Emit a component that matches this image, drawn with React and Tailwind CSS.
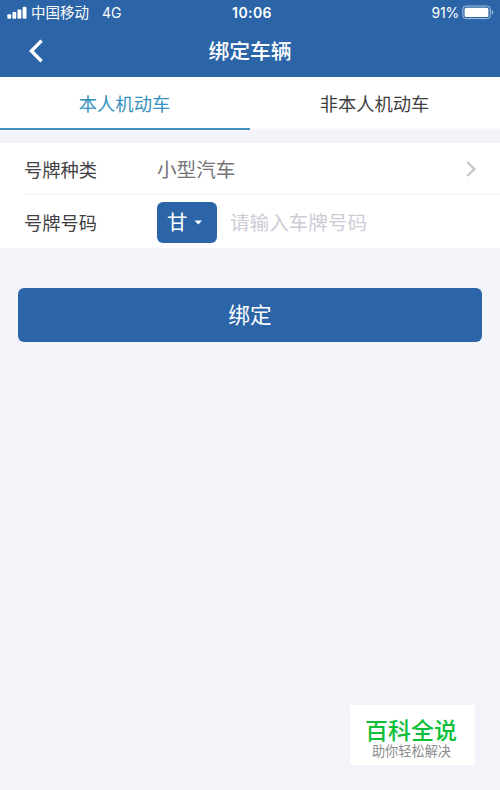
import React from 'react';

const INTER = "font-['Inter','Noto_Sans_CJK_SC',sans-serif]";

function StatusBar() {
  return (
    <div className={`grid h-[25px] grid-cols-3 items-center pl-[7px] pr-[6px] ${INTER}`}>
      <div className="flex items-center">
        <svg width="20" height="13" viewBox="0 0 20 13" fill="currentColor">
          <rect x="0.3" y="8.3" width="3.8" height="4.4" rx="1" />
          <rect x="5.4" y="6" width="3.8" height="6.7" rx="1" />
          <rect x="10.5" y="3.6" width="3.8" height="9.1" rx="1" />
          <rect x="15.6" y="0.8" width="3.9" height="11.9" rx="1" />
        </svg>
        <span className="ml-[4px] pt-[2px] whitespace-nowrap text-[14.5px] leading-none">中国移动</span>
        <span className="ml-[13px] text-[14px] leading-none">4G</span>
      </div>
      <div className="pl-[3px] text-center text-[14px] leading-none font-semibold tracking-[0.4px]">10:06</div>
      <div className="flex items-center justify-end">
        <span className="text-[14px] leading-none tracking-[-0.2px]">91%</span>
        <svg className="ml-[3px]" width="32" height="15" viewBox="0 0 32 15">
          <rect x="0.9" y="1" width="27.4" height="12.6" rx="3" fill="none" stroke="#a9c3e0" strokeWidth="1" />
          <rect x="2.6" y="2.7" width="23.8" height="9.2" rx="1.5" fill="#fff" />
          <path d="M29.8 5.2v4.2c1.1-.4 1.4-1.2 1.4-2.1s-.3-1.7-1.4-2.1z" fill="#a9c3e0" />
        </svg>
      </div>
    </div>
  );
}

function TitleBar() {
  return (
    <div className="grid h-[52px] grid-cols-[60px_1fr_60px] items-center">
      <svg className="ml-[28px]" width="17" height="26" viewBox="0 0 17 26" fill="none" stroke="currentColor" strokeWidth="3.4">
        <path d="M13.6 2.6 3.4 13l10.2 10.2" />
      </svg>
      <h1 className="pb-[2px] text-center text-[20.8px] leading-none font-medium">绑定车辆</h1>
    </div>
  );
}

function Tabs() {
  return (
    <div className="grid h-[53px] grid-cols-2 bg-white text-[18.3px]">
      <div className="flex items-center justify-center border-b-2 border-[#4292bd] pt-[2px] pr-[1px] text-[#3490bd]">本人机动车</div>
      <div className="flex items-center justify-center border-b-2 border-[#fafafc] pt-[2px] pr-[1px] text-[#3f3f44]">非本人机动车</div>
    </div>
  );
}

function VehicleForm() {
  return (
    <div className="mt-[13px] h-[105px] bg-white pl-[24px]">
      <div className="flex h-[52px] items-center border-b border-[#f4f4f6]">
        <span className="w-[133px] pt-[2px] text-[18.3px] text-[#3f3f44]">号牌种类</span>
        <span className="flex-1 text-[19.6px] text-[#747478]">小型汽车</span>
        <svg className="mr-[22px]" width="14" height="18" viewBox="0 0 14 18" fill="none" stroke="#c7c7cc" strokeWidth="2.4">
          <path d="m3.2 2 7.2 7-7.2 7" />
        </svg>
      </div>
      <div className="flex h-[54px] items-center">
        <span className="w-[133px] pt-px text-[18.3px] text-[#3f3f44]">号牌号码</span>
        <div className="flex h-[41px] w-[60px] items-center rounded-[6px] bg-[#2b65a8] pl-[10px] text-white">
          <span className="pb-px text-[20.5px]">甘</span>
          <svg className="ml-[6px]" width="9" height="5" viewBox="0 0 9 5" fill="currentColor">
            <path d="M.6.4h7.4L4.3 4.6z" />
          </svg>
        </div>
        <span className="ml-[13px] text-[19.6px] text-[#ccccd5]">请输入车牌号码</span>
      </div>
    </div>
  );
}

export default function App() {
  return (
    <div className="relative h-[790px] w-[500px] overflow-hidden bg-[#f2f4f9] font-['Noto_Sans_CJK_SC',sans-serif]">
      <header className="h-[77px] bg-[#2b65a8] text-white">
        <StatusBar />
        <TitleBar />
      </header>
      <Tabs />
      <VehicleForm />
      <button className="mt-[40px] ml-[18px] flex h-[54px] w-[464px] items-center justify-center rounded-[6px] bg-[#2b65a8] pb-px text-[21.7px] text-white">
        绑定
      </button>
      <div className="absolute top-[705px] left-[350px] flex h-[60px] w-[125px] flex-col items-center bg-white pt-[12px]">
        <span className="mr-[3px] text-[23px] leading-[24px] font-medium text-[#0dbf38]">百科全说</span>
        <span className="mr-[2px] mt-px text-[13.2px] leading-[18px] text-[#8c8c8c]">助你轻松解决</span>
      </div>
    </div>
  );
}
